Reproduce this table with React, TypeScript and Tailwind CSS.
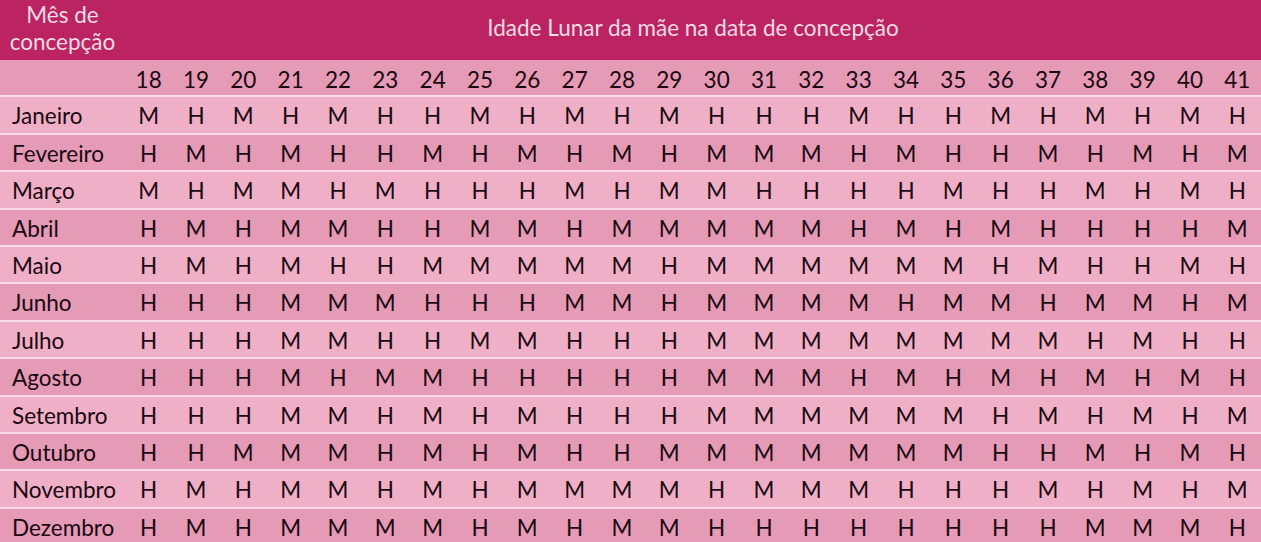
const ages = Array.from({ length: 24 }, (_, i) => 18 + i);

const months: [string, string][] = [
  ["Janeiro", "MHMHMHHMHMHMHHHMHHMHMHMH"],
  ["Fevereiro", "HMHMHHMHMHMHMMMHMHHMHMHM"],
  ["Março", "MHMMHMHHHMHMMHHHHMHHMHMH"],
  ["Abril", "HMHMMHHMMHMMMMMHMHMHHHHM"],
  ["Maio", "HMHMHHMMMMMHMMMMMMHMHHMH"],
  ["Junho", "HHHMMMHHHMMHMMMMHMMHMMHM"],
  ["Julho", "HHHMMHHMMHHHMMMMMMMMHMHH"],
  ["Agosto", "HHHMHMMHHHHHMMMHMHMHMHMH"],
  ["Setembro", "HHHMMHMHMHHHMMMMMMHMHMHM"],
  ["Outubro", "HHMMMHMHMHHMMMMMMMHHMHMH"],
  ["Novembro", "HMHMMHMHMMMMHMMMHHHMHMHM"],
  ["Dezembro", "HMHMMMMHMHMMHHHHHHHHMMMH"],
];

const cols = "grid grid-cols-[125px_repeat(24,minmax(0,1fr))]";

export default function App() {
  return (
    <div
      className="w-[1261px] h-[542px] overflow-hidden bg-[#efafc7] text-[#1a0810]"
      style={{ fontFamily: "Lato, 'Noto Sans', sans-serif" }}
    >
      {/* header */}
      <div className={`${cols} h-[60px] bg-[#bb2460] text-[#f6dbe6]`}>
        <div className="flex flex-col items-center justify-center text-[22.5px] leading-[27px] pb-1">
          <span>Mês de</span>
          <span>concepção</span>
        </div>
        <div className="col-span-24 flex items-center justify-center text-[22.5px] pb-1">
          Idade Lunar da mãe na data de concepção
        </div>
      </div>

      {/* ages */}
      <div className={`${cols} h-[37.4px] pt-[3px] bg-[#e59ab6] border-b-2 border-[#f7dbe6] text-[22.5px]`}>
        <div />
        {ages.map((a) => (
          <div key={a} className="flex items-center justify-center">
            {a}
          </div>
        ))}
      </div>

      {months.map(([name, row], r) => (
        <div
          key={name}
          className={`${cols} h-[37.4px] pt-[2px] border-b-2 border-[#f7dbe6] text-[22.5px] ${
            r % 2 === 0 ? "bg-[#efafc7]" : "bg-[#e59ab6]"
          }`}
        >
          <div className="flex items-center pl-3">{name}</div>
          {row.split("").map((v, i) => (
            <div key={i} className="flex items-center justify-center">
              {v}
            </div>
          ))}
        </div>
      ))}
    </div>
  );
}
